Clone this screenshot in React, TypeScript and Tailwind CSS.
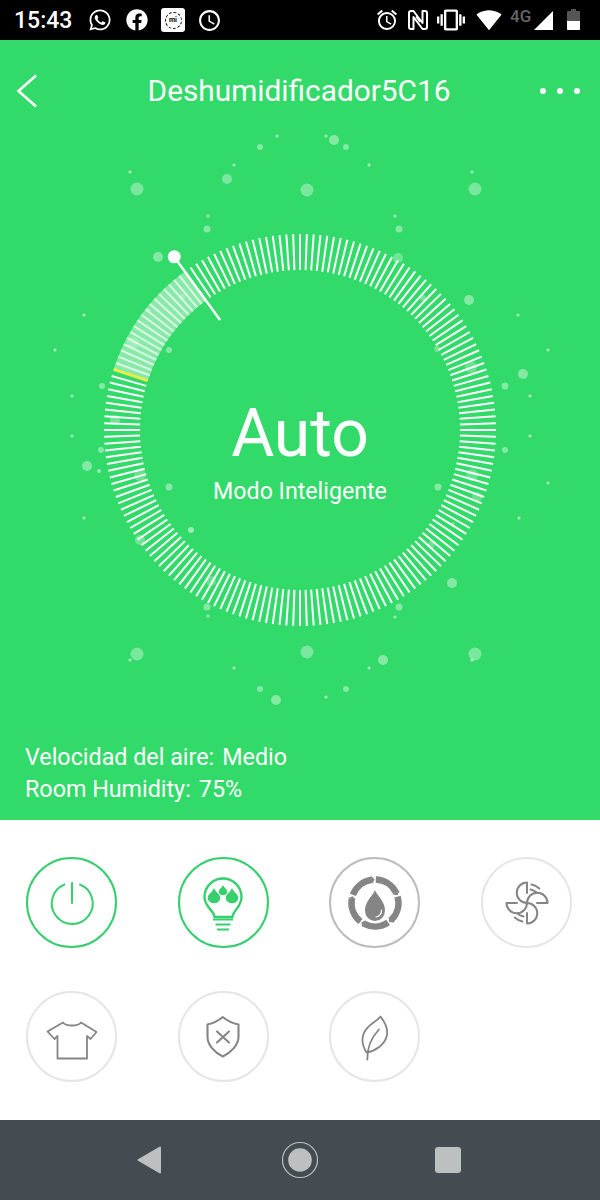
import React from 'react';
import { FaWhatsapp, FaFacebook } from 'react-icons/fa';
import { MdAccessTime, MdAlarm, MdVibration, MdSignalWifi4Bar } from 'react-icons/md';

const CX = 300;
const CY = 300;

// [x, y, r, opacity] in dial coordinates (page y minus 130)
const particles: number[][] = [
  [130, 42, 1.5, 0.6], [137, 59, 6.5, 0.35], [234, 35, 1.5, 0.6], [227, 49, 5, 0.35], [260, 17, 3, 0.4], [277, 6, 1.5, 0.6],
  [208, 86, 1.5, 0.6], [207, 99, 3.5, 0.4], [158, 127, 5, 0.4], [84, 185, 1.5, 0.6], [326, 6, 1.5, 0.6], [334, 10, 5, 0.4],
  [346, 17, 3, 0.4], [369, 35, 1.5, 0.6], [307, 60, 6.5, 0.35], [472, 42, 1.5, 0.6], [475, 59, 6.5, 0.35], [395, 86, 1.5, 0.6],
  [399, 99, 3.5, 0.4], [398, 128, 5, 0.3], [469, 170, 5, 0.4], [518, 185, 1.5, 0.6], [423, 168, 3, 0.3], [437, 219, 3, 0.3],
  [471, 237, 6, 0.25], [548, 220, 1.5, 0.6], [523, 244, 5, 0.4], [505, 256, 3.5, 0.4], [530, 266, 1.5, 0.6], [72, 306, 1.5, 0.6],
  [101, 320, 3, 0.4], [87, 336, 5, 0.4], [99, 341, 2, 0.5], [140, 345, 6, 0.25], [169, 357, 3.5, 0.4], [84, 388, 1.5, 0.6],
  [191, 400, 3, 0.5], [140, 410, 5, 0.3], [211, 451, 5, 0.25], [207, 477, 3.5, 0.4], [208, 486, 1.5, 0.6], [137, 524, 6.5, 0.35],
  [130, 530, 1.5, 0.6], [234, 538, 1.5, 0.6], [260, 559, 3, 0.4], [276, 570, 5, 0.4], [115, 290, 5, 0.3], [102, 256, 3, 0.4],
  [72, 266, 1.5, 0.6], [55, 220, 1.5, 0.6], [169, 220, 3, 0.4], [133, 213, 6, 0.2], [182, 167, 3, 0.25], [148, 180, 2, 0.3],
  [530, 306, 1.5, 0.6], [505, 320, 3, 0.4], [548, 353, 1.5, 0.6], [438, 357, 3.5, 0.4], [472, 345, 6, 0.25], [477, 367, 5, 0.25],
  [519, 388, 1.5, 0.6], [453, 394, 2, 0.3], [431, 415, 3.5, 0.25], [452, 453, 5, 0.4], [399, 477, 3.5, 0.4], [395, 487, 1.5, 0.6],
  [307, 522, 6.5, 0.35], [383, 530, 5, 0.4], [369, 538, 1.5, 0.6], [346, 559, 3, 0.4], [326, 567, 1.5, 0.6], [475, 524, 6.5, 0.35],
  [472, 530, 1.5, 0.6],
];

function polar(deg: number, r: number, cx = CX, cy = CY) {
  const a = (deg * Math.PI) / 180;
  return { x: cx + Math.sin(a) * r, y: cy - Math.cos(a) * r };
}

function arc(from: number, to: number, r: number, cx = CX, cy = CY) {
  const a = polar(from, r, cx, cy);
  const b = polar(to, r, cx, cy);
  return `M${a.x} ${a.y} A${r} ${r} 0 ${to - from > 180 ? 1 : 0} 1 ${b.x} ${b.y}`;
}

const Dial = () => {
  const ticks = Array.from({ length: 180 }, (_, i) => i * 2 - 178);
  const needleIn = polar(-36, 136);
  const needleOut = polar(-36, 214);
  return (
    <svg width="600" height="600" viewBox="0 0 600 600" className="[grid-area:1/1]">
      {particles.map(([x, y, r, o], i) => (
        <circle key={i} cx={x} cy={y} r={r} fill="#fff" opacity={o} />
      ))}
      <path d={arc(-72, -36, 178)} fill="none" stroke="#fff" strokeOpacity="0.42" strokeWidth="36" />
      {ticks.map((deg) => {
        const a = polar(deg, 160);
        const b = polar(deg, 196);
        const lit = deg > -72 && deg < -36;
        return (
          <line
            key={deg}
            x1={a.x}
            y1={a.y}
            x2={b.x}
            y2={b.y}
            stroke={deg === -72 ? '#eceb4a' : '#fff'}
            strokeOpacity={lit ? 0.7 : 1}
            strokeWidth={deg === -72 ? 3 : 2}
          />
        );
      })}
      <line x1={needleIn.x} y1={needleIn.y} x2={needleOut.x} y2={needleOut.y} stroke="#fff" strokeWidth="2.5" />
      <circle cx={needleOut.x} cy={needleOut.y} r="6.5" fill="#fff" />
    </svg>
  );
};

const StatusBar = () => (
  <div className="h-10 bg-black flex items-center justify-between pl-[14px] pr-5 text-white">
    <div className="flex items-center">
      <span className="text-[23px] leading-none font-medium w-[57px]">15:43</span>
      <FaWhatsapp size={24} className="ml-[17px]" />
      <FaFacebook size={22} className="ml-[14px]" />
      <div className="ml-[13px] w-6 h-6 bg-white rounded-[3px] flex items-center justify-center">
        <div className="w-[17px] h-[17px] rounded-full border border-dashed border-black flex items-center justify-center">
          <span className="text-[7px] leading-none font-bold text-black">mi</span>
        </div>
      </div>
      <MdAccessTime size={25} className="ml-[12px]" />
    </div>
    <div className="flex items-center">
      <MdAlarm size={24} />
      <svg width="20" height="20" viewBox="0 0 20 20" className="ml-[9px]" fill="none" stroke="#fff">
        <path d="M5.500 1H3Q1 1 1 3V17Q1 19 3 19H5.500V7L14.500 19H17Q19 19 19 17V3Q19 1 17 1H14.500V13L5.500 1Z" strokeWidth="2" strokeLinejoin="round" />
        <path d="M8 6.500L12 12" strokeWidth="1.600" />
      </svg>
      <MdVibration size={28} className="ml-[9px]" />
      <MdSignalWifi4Bar size={26} className="ml-[11px]" />
      <span className="ml-[8px] w-[24px] text-[17px] leading-none font-medium text-[#666] -mt-[8px]">4G</span>
      <svg width="19" height="19" viewBox="0 0 19 19" className="mt-[1px]">
        <path d="M19 0V19H0Z" fill="#fff" />
      </svg>
      <svg width="13" height="21" viewBox="0 0 13 21" className="ml-[14px] -mt-[1px]">
        <path d="M4 0H9V2H12Q13 2 13 3V21H0V3Q0 2 1 2H4Z" fill="#555" />
        <path d="M0 12H13V20Q13 21 12 21H1Q0 21 0 20Z" fill="#fff" />
      </svg>
    </div>
  </div>
);

const green = '#36cf6e';
const gray = '#858585';

const Round = ({ ring, children }: { ring: string; children: React.ReactNode }) => (
  <div className={`w-[91px] h-[91px] rounded-full border-2 box-border ${ring}`}>
    <svg width="92" height="92" viewBox="0 0 92 92" className="-m-[2.5px]" fill="none" strokeLinecap="round" strokeLinejoin="round">
      {children}
    </svg>
  </div>
);

const drop = (x: number, y: number, h: number) =>
  `M${x} ${y} C${x + h * 0.12} ${y + h * 0.3} ${x + h * 0.42} ${y + h * 0.42} ${x + h * 0.42} ${y + h * 0.66} A${h * 0.42} ${h * 0.36} 0 0 1 ${x - h * 0.42} ${y + h * 0.66} C${x - h * 0.42} ${y + h * 0.42} ${x - h * 0.12} ${y + h * 0.3} ${x} ${y}Z`;

const PowerIcon = () => (
  <g stroke={green} strokeWidth="2">
    <path d="M38.500 27.500A20.500 20.500 0 1 0 54 27.500" />
    <path d="M46 26V46" />
  </g>
);

const BulbIcon = () => (
  <g>
    <path
      d="M37.500 60C37.500 54 27.500 50 27.500 40A18.500 18.500 0 0 1 64.500 40C64.500 50 55.500 54 55.500 60Z"
      stroke={green}
      strokeWidth="2.400"
    />
    <path d="M36 62.500H56M38.500 67.500H53.500M40 72.500H52" stroke={green} strokeWidth="2.200" strokeLinecap="butt" />
    <path d={drop(37, 31, 15)} fill={green} />
    <path d={drop(46, 28, 10)} fill={green} />
    <path d={drop(55, 31, 15)} fill={green} />
  </g>
);

const CycleIcon = () => (
  <g>
    {[2, 74, 146, 218, 290].map((start) => {
      const tipOut = polar(start + 62, 27.5, 46, 46);
      const tipIn = polar(start + 62, 19.500, 46, 46);
      const tip = polar(start + 69, 23.500, 46, 46);
      return (
        <g key={start}>
          <path d={arc(start, start + 62.500, 23.500, 46, 46)} stroke={gray} strokeWidth="6.500" strokeLinecap="butt" />
          <path d={`M${tipOut.x} ${tipOut.y}L${tip.x} ${tip.y}L${tipIn.x} ${tipIn.y}Z`} fill={gray} />
        </g>
      );
    })}
    <path d="M46 33C47.500 38 56 44 56 53.500A10 10.500 0 0 1 36 53.500C36 44 44.500 38 46 33Z" fill={gray} />
    <path d="M52.500 53A6.500 6.500 0 0 1 47 60" stroke="#fff" strokeWidth="1.200" />
  </g>
);

const FanIcon = () => (
  <g stroke={gray} strokeWidth="2">
    {[0, 90, 180, 270].map((deg) => (
      <path
        key={deg}
        transform={`rotate(${deg} 46 46)`}
        d="M46 36V25.500A10.250 10.250 0 0 0 46 46"
      />
    ))}
    <path d="M50.500 27.500C53 28 56 29.500 58.300 31.500M49.500 32.500C52 33 54 34 55.700 35.500" />
    <path d="M41.500 64.500C39 64 36 62.500 33.700 60.500M42.500 59.500C40 59 38 58 36.300 56.500" />
  </g>
);

const ShirtIcon = () => (
  <path
    d="M37 31.500C40 35.500 52 35.500 55 31.500L70.500 41L64.500 48L61 45V67.500H31.500V45L28.500 48L21.500 40.500Z"
    stroke={gray}
    strokeWidth="1.800"
  />
);

const ShieldIcon = () => (
  <g stroke={gray} strokeWidth="2.100">
    <path d="M45.800 26C41 30 35 32.500 30.500 33.500V46C30.500 54 38 62 45.800 65.500C53.500 62 61.500 54 61.500 46V33.500C56.500 32.500 50.500 30 45.800 26Z" />
    <path d="M40 40.500L52 51.500M52 40.500L40 51.500" />
  </g>
);

const LeafIcon = () => (
  <g stroke={gray} strokeWidth="1.800">
    <path d="M51.500 25.500C48 31 38 33 34.500 43C32 50 34 56 37.500 61.500C46 60 56 54 58 44C59 37 55 30 51.500 25.500Z" />
    <path d="M38.300 68.500C38 58 42 47 50 38.500" />
  </g>
);

const NavBar = () => (
  <div className="h-20 bg-[#454c51] flex items-center pl-[137px]">
    <svg width="25" height="28" viewBox="0 0 25 28">
      <path d="M23 1.500V26.500L1.500 14Z" fill="#bcc0c1" stroke="#bcc0c1" strokeWidth="2" strokeLinejoin="round" />
    </svg>
    <svg width="38" height="38" viewBox="0 0 38 38" className="ml-[119px]">
      <circle cx="19" cy="19" r="17.500" fill="none" stroke="#bcc0c1" strokeWidth="1.200" />
      <circle cx="19" cy="19" r="11.800" fill="#bcc0c1" />
    </svg>
    <div className="ml-[116px] w-[26px] h-[26px] rounded-[3px] bg-[#bcc0c1]" />
  </div>
);

export default function App() {
  return (
    <div className="w-[600px] h-[1200px] flex flex-col overflow-hidden font-['Roboto',sans-serif]">
      <StatusBar />

      {/* Green dial panel */}
      <div className="h-[780px] bg-[#32da69] text-white flex flex-col">
        <div className="h-[90px] pt-3 pl-[16px] pr-5 flex items-center">
          <div className="flex-1">
            <svg width="22" height="34" viewBox="0 0 22 34" className="block">
              <path d="M20 1.500L2.500 17L20 32.500" fill="none" stroke="#fff" strokeWidth="2.600" />
            </svg>
          </div>
          <span className="text-[29.800px] leading-none whitespace-nowrap ml-[2px]">Deshumidificador5C16</span>
          <div className="flex-1 flex items-center justify-end gap-[11px]">
            <span className="w-[6px] h-[6px] rounded-full bg-white" />
            <span className="w-[6px] h-[6px] rounded-full bg-white" />
            <span className="w-[6px] h-[6px] rounded-full bg-white" />
          </div>
        </div>

        <div className="h-[600px] grid">
          <Dial />
          <div className="[grid-area:1/1] flex flex-col items-center pt-[264px]">
            <span className="text-[66px] leading-[80px]">Auto</span>
            <span className="text-[23.200px] leading-6 mt-[5px]">Modo Inteligente</span>
          </div>
        </div>

        <div className="mt-[11px] pl-[25px] text-[23.300px] leading-[32px]">
          <div className="flex gap-[8px]">
            <span>Velocidad del aire:</span>
            <span>Medio</span>
          </div>
          <div className="flex gap-[8px]">
            <span>Room Humidity:</span>
            <span>75%</span>
          </div>
        </div>
      </div>

      {/* Mode buttons */}
      <div className="h-[300px] bg-white pl-[26px] pt-[37px]">
        <div className="flex gap-[60.700px]">
          <Round ring="border-[#36cf6e]"><PowerIcon /></Round>
          <Round ring="border-[#36cf6e]"><BulbIcon /></Round>
          <Round ring="border-[#bdbdbd]"><CycleIcon /></Round>
          <Round ring="border-[#e6e6e6]"><FanIcon /></Round>
        </div>
        <div className="flex gap-[60.700px] mt-[43px]">
          <Round ring="border-[#e6e6e6]"><ShirtIcon /></Round>
          <Round ring="border-[#e6e6e6]"><ShieldIcon /></Round>
          <Round ring="border-[#e6e6e6]"><LeafIcon /></Round>
        </div>
      </div>

      <NavBar />
    </div>
  );
}
